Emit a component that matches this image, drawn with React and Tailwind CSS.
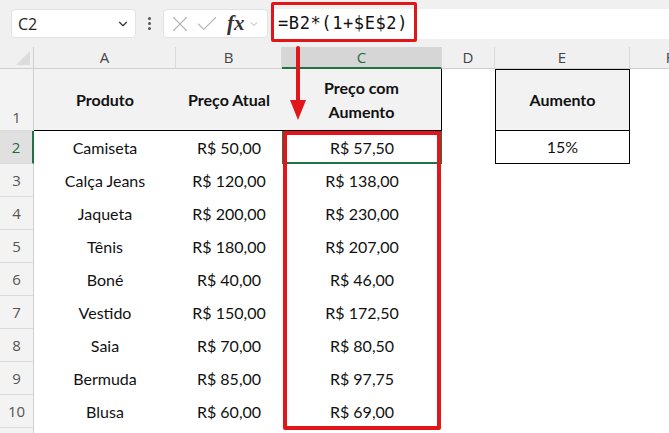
import { X, Check, ChevronDown } from "lucide-react";

const rows = [
  ["Camiseta", "R$ 50,00", "R$ 57,50"],
  ["Calça Jeans", "R$ 120,00", "R$ 138,00"],
  ["Jaqueta", "R$ 200,00", "R$ 230,00"],
  ["Tênis", "R$ 180,00", "R$ 207,00"],
  ["Boné", "R$ 40,00", "R$ 46,00"],
  ["Vestido", "R$ 150,00", "R$ 172,50"],
  ["Saia", "R$ 70,00", "R$ 80,50"],
  ["Bermuda", "R$ 85,00", "R$ 97,75"],
  ["Blusa", "R$ 60,00", "R$ 69,00"],
];

const cellFont = { fontFamily: "Lato, 'Liberation Sans', sans-serif" };
const uiFont = { fontFamily: "'Open Sans', 'Noto Sans', sans-serif" };

function ColHead({ children, active }) {
  return (
    <div
      className={
        "flex items-center justify-center text-[15px] border-r border-[#dadada] " +
        (active
          ? "bg-[#d6d6d6] text-[#1f6b41] border-b-2 border-b-[#217346]"
          : "bg-[#f0f0f0] text-[#444] border-b border-b-[#cfcfcf]")
      }
      style={uiFont}
    >
      {children}
    </div>
  );
}

function RowHead({ n, active, bottom }) {
  return (
    <div
      className={
        "flex justify-center text-[15px] border-b border-[#dadada] " +
        (bottom ? "items-end pb-[2px] " : "items-center ") +
        (active
          ? "bg-[#e0e0e0] text-[#1f6b41] border-r-2 border-r-[#217346]"
          : "bg-[#f3f3f3] text-[#555] border-r border-r-[#cfcfcf]")
      }
      style={uiFont}
    >
      {n}
    </div>
  );
}

export default function App() {
  return (
    <div className="relative w-[669px] h-[433px] overflow-hidden bg-white">
      {/* formula bar */}
      <div className="h-[47px] bg-[#f0f0f0] flex items-center pl-[11px]">
        <div className="w-[125px] h-[29px] bg-white rounded-[4px] border border-[#e2e2e2] flex items-center justify-between pl-[6px] pr-[5px]">
          <span className="text-[16px] text-[#222]" style={uiFont}>C2</span>
          <ChevronDown size={14} strokeWidth={2} className="text-[#333]" />
        </div>
        <div className="w-[27px] flex flex-col items-center gap-[2px]">
          <span className="w-[3px] h-[3px] bg-[#555] rounded-full" />
          <span className="w-[3px] h-[3px] bg-[#555] rounded-full" />
          <span className="w-[3px] h-[3px] bg-[#555] rounded-full" />
        </div>
        <div className="w-[105px] h-[29px] bg-white rounded-[4px] border border-[#e2e2e2] flex items-center pl-[3px]">
          <X size={26} strokeWidth={1} className="text-[#b5b5b5]" />
          <Check size={26} strokeWidth={1} className="text-[#b5b5b5] ml-[1px]" />
          <span
            className="ml-[7px] text-[21px] italic font-bold text-[#333] leading-none"
            style={{ fontFamily: "'Liberation Serif', serif" }}
          >
            fx
          </span>
          <ChevronDown size={12} strokeWidth={1.5} className="text-[#999] ml-[3px]" />
        </div>
        <div className="ml-[4px] flex-1 h-[30px] bg-white flex items-center pl-[6px]">
          <span
            className="text-[17px] text-[#111] tracking-[0.6px]"
            style={{ fontFamily: "'DejaVu Sans Mono', 'Liberation Mono', monospace" }}
          >
            =B2*(1+$E$2)
          </span>
        </div>
      </div>

      {/* sheet grid */}
      <div
        className="grid grid-cols-[34px_142px_106px_160px_53px_135px_80px] grid-rows-[22px_62px_repeat(10,33px)] text-[16px] text-[#111]"
        style={cellFont}
      >
        <div className="bg-[#f0f0f0] border-r border-b border-[#cfcfcf] relative">
          <div className="absolute right-[3px] bottom-[3px] w-0 h-0 border-l-[14px] border-l-transparent border-b-[14px] border-b-[#dcdcdc]" />
        </div>
        <ColHead>A</ColHead>
        <ColHead>B</ColHead>
        <ColHead active>C</ColHead>
        <ColHead>D</ColHead>
        <ColHead>E</ColHead>
        <ColHead>F</ColHead>

        {/* row 1 */}
        <RowHead n={1} bottom />
        <div className="bg-[#f2f2f2] border-b border-black flex items-center justify-center font-bold">Produto</div>
        <div className="bg-[#f2f2f2] border-b border-black flex items-center justify-center font-bold">Preço Atual</div>
        <div className="bg-[#f2f2f2] border-b border-r border-black flex flex-col items-center justify-center font-bold leading-[24px]">
          <span>Preço com</span>
          <span>Aumento</span>
        </div>
        <div />
        <div className="bg-[#f2f2f2] border border-black flex items-center justify-center font-bold">Aumento</div>
        <div />

        {rows.map((r, i) => (
          <div key={i} className="contents">
            <RowHead n={i + 2} active={i === 0} />
            <div className="flex items-center justify-center">{r[0]}</div>
            <div className="flex items-center justify-center">{r[1]}</div>
            <div
              className={
                "flex items-center justify-center " +
                (i === 0 ? "border-2 border-[#217346]" : "")
              }
            >
              {r[2]}
            </div>
            <div />
            {i === 0 ? (
              <div className="border-x border-b border-black flex items-center justify-center">15%</div>
            ) : (
              <div />
            )}
            <div />
          </div>
        ))}

        <RowHead n="" />
      </div>

      {/* annotations */}
      <div className="absolute left-[271px] top-[2px] w-[146px] h-[40px] border-[3px] border-[#e0161b] rounded-[2px]" />
      <div className="absolute left-[283px] top-[131px] w-[158px] h-[299px] border-[4px] border-[#e0161b] rounded-[2px]" />
      <svg className="absolute left-[288px] top-[46px]" width="20" height="76" viewBox="0 0 20 76">
        <line x1="10" y1="2" x2="10" y2="58" stroke="#e0161b" strokeWidth="4" strokeLinecap="round" />
        <polygon points="2,54 18,54 10,74" fill="#e0161b" />
      </svg>
    </div>
  );
}
